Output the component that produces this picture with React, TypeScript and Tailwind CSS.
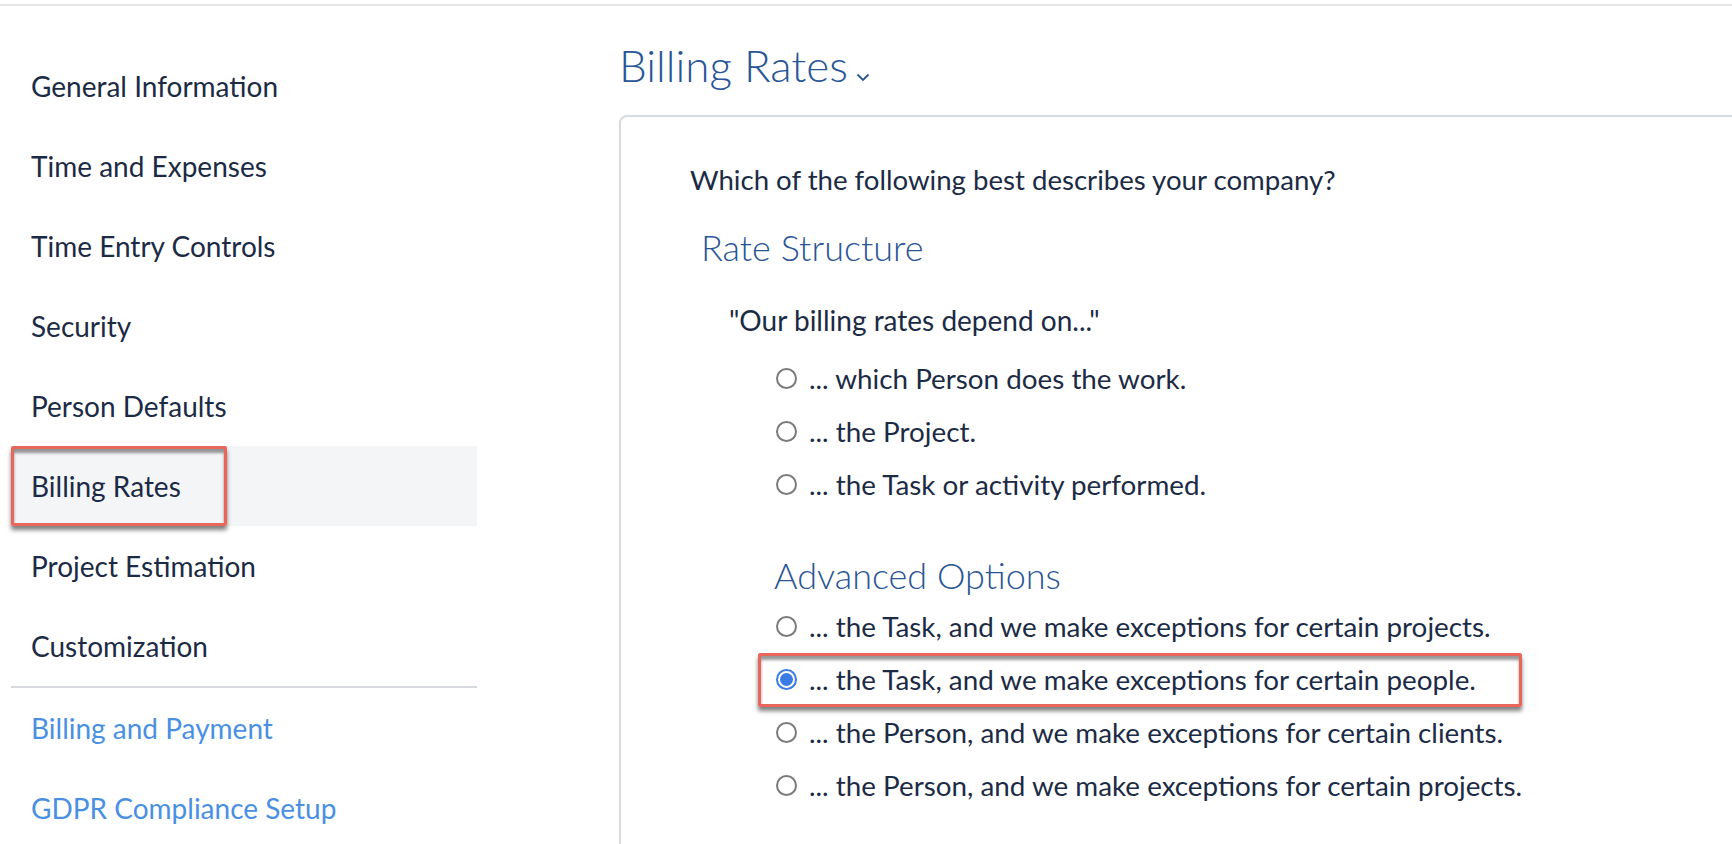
import React from 'react';

const navItems = [
  'General Information',
  'Time and Expenses',
  'Time Entry Controls',
  'Security',
  'Person Defaults',
  'Billing Rates',
  'Project Estimation',
  'Customization',
];

const linkItems = ['Billing and Payment', 'GDPR Compliance Setup'];

const basicOptions = [
  '... which Person does the work.',
  '... the Project.',
  '... the Task or activity performed.',
];

const advancedOptions = [
  '... the Task, and we make exceptions for certain projects.',
  '... the Task, and we make exceptions for certain people.',
  '... the Person, and we make exceptions for certain clients.',
  '... the Person, and we make exceptions for certain projects.',
];

const Radio: React.FC<{ checked?: boolean }> = ({ checked = false }) =>
  checked ? (
    <span className="w-[21px] h-[21px] rounded-full border-2 border-[#3b7be6] flex items-center justify-center shrink-0">
      <span className="w-[13px] h-[13px] rounded-full bg-[#3b7be6]" />
    </span>
  ) : (
    <span className="w-[21px] h-[21px] rounded-full border-2 border-[#7a7a7a] bg-white shrink-0" />
  );

const Annotation: React.FC<{ className: string }> = ({ className }) => (
  <div
    className={`absolute border-[3px] border-[#e8665a] rounded-[2px] pointer-events-none shadow-[0_4px_4px_rgba(0,0,0,0.5),inset_0_4px_3px_rgba(0,0,0,0.4)] ${className}`}
  />
);

const OptionRow: React.FC<{ label: string; checked?: boolean; highlight?: boolean }> = ({
  label,
  checked,
  highlight,
}) => (
  <div className="relative h-[53px] flex items-center gap-[12px] ml-[86px]">
    {highlight && <Annotation className="-left-[18px] top-0 w-[764px] h-[54px]" />}
    <Radio checked={checked} />
    <span className="text-[27.8px] text-[#1c2b45]">{label}</span>
  </div>
);

export default function App() {
  return (
    <div className="w-full h-[844px] overflow-hidden bg-white font-['Lato','Liberation_Sans',sans-serif]">
      <div className="mt-[4px] h-[2px] bg-[#e6e6e6]" />

      <div className="flex">
        {/* Sidebar */}
        <aside className="w-[466px] ml-[11px] pt-[40px] shrink-0">
          {navItems.map((item) => {
            const active = item === 'Billing Rates';
            return (
              <div
                key={item}
                className={`relative h-[80px] flex items-center pl-[20px] text-[28px] text-[#1c2b45] ${
                  active ? 'bg-[#f4f5f7]' : ''
                }`}
              >
                {active && <Annotation className="left-0 top-0 w-[216px] h-[80px]" />}
                {item}
              </div>
            );
          })}
          <div className="h-[2px] bg-[#d6d9de]" />
          {linkItems.map((item) => (
            <div key={item} className="h-[80px] flex items-center pl-[20px] text-[28px] text-[#4a90e2]">
              {item}
            </div>
          ))}
        </aside>

        {/* Main */}
        <main className="flex-1 ml-[142px] min-w-0">
          <div className="h-[109px] flex items-center pt-[8px]">
            <h1 className="text-[44px] font-light text-[#285596] flex items-baseline gap-[8px]">
              Billing Rates
              <svg width="14" height="9" viewBox="0 0 14 9" className="mb-[1px]">
                <path d="M1.5 1.5 L7 7 L12.5 1.5" fill="none" stroke="#285596" strokeWidth="1.8" />
              </svg>
            </h1>
          </div>

          <section className="w-[1200px] h-[800px] border-2 border-[#d7dbe0] rounded-tl-[8px] pl-[69px] pt-[43px]">
            <p className="h-[40px] flex items-center text-[27.6px] text-[#1c2b45]">
              Which of the following best describes your company?
            </p>

            <h2 className="mt-[27px] ml-[11px] h-[40px] flex items-center text-[36px] font-light text-[#285596]">
              Rate Structure
            </h2>

            <p className="mt-[33px] ml-[39px] h-[40px] flex items-center text-[28px] text-[#1c2b45]">
              "Our billing rates depend on..."
            </p>

            <div className="mt-[12px]">
              {basicOptions.map((o) => (
                <OptionRow key={o} label={o} />
              ))}
            </div>

            <h2 className="mt-[44px] ml-[84px] h-[40px] flex items-center text-[36px] font-light text-[#285596]">
              Advanced Options
            </h2>

            <div className="mt-[5px]">
              {advancedOptions.map((o, i) => (
                <OptionRow key={o} label={o} checked={i === 1} highlight={i === 1} />
              ))}
            </div>
          </section>
        </main>
      </div>
    </div>
  );
}
